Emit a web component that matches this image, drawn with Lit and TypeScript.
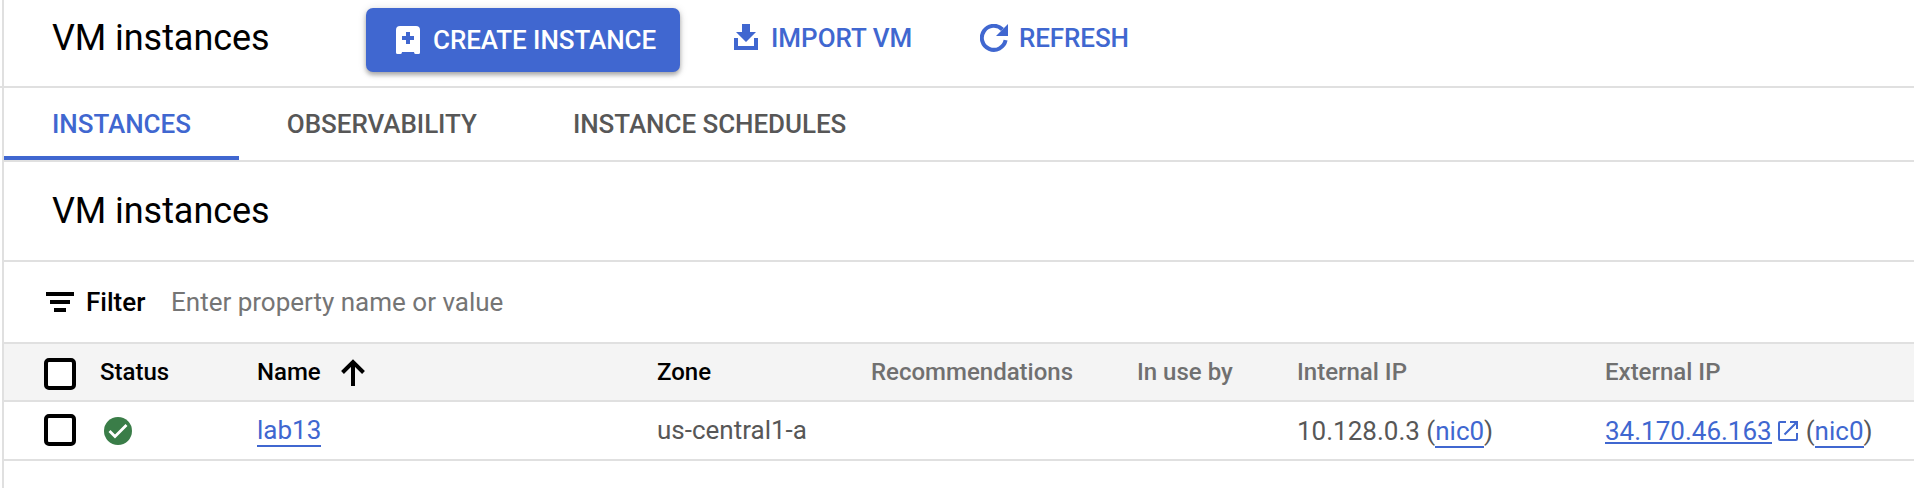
import { LitElement, html, css, svg } from "lit";
import { customElement } from "lit/decorators.js";

@customElement("app-root")
export class AppRoot extends LitElement {
  static styles = css`
    :host {
      display: block;
      box-sizing: border-box;
      height: 488px;
      overflow: hidden;
      background: #fff;
      color: #000;
      font-family: Roboto, "Liberation Sans", sans-serif;
      font-size: 26px;
      line-height: 32px;
    }
    *,
    *::before {
      box-sizing: border-box;
    }
    svg {
      display: block;
      flex: none;
    }
    .page {
      display: flex;
      height: 488px;
      padding-left: 2px;
    }
    .panel {
      flex: 1;
      border-left: 2px solid #e0e0e0;
    }
    .bar {
      display: flex;
      align-items: flex-start;
      height: 88px;
      margin-left: -4px;
      padding-left: 52px;
      border-bottom: 2px solid #e0e0e0;
    }
    .panel h1,
    .panel h2 {
      margin: 0;
      font-size: 36px;
      font-weight: 400;
      line-height: 48px;
      letter-spacing: -0.06px;
      white-space: nowrap;
    }
    .bar h1 {
      width: 314px;
      padding-top: 14px;
    }
    .btn {
      display: flex;
      align-items: center;
      height: 64px;
      padding: 0;
      border: 0;
      background: none;
      color: #4067d0;
      font: 500 26px/32px Roboto, sans-serif;
      white-space: nowrap;
    }
    .primary {
      width: 314px;
      margin-top: 8px;
      padding-left: 30px;
      gap: 13px;
      border-radius: 7px;
      background: #4067d0;
      color: #fff;
      letter-spacing: -0.08px;
      box-shadow: 0 3px 4px rgba(0, 0, 0, 0.28), 0 1px 8px rgba(0, 0, 0, 0.14);
    }
    .import {
      margin: 6px 0 0 54px;
      width: 246px;
      gap: 13px;
    }
    .refresh {
      margin-top: 6px;
      gap: 11px;
      letter-spacing: -0.1px;
    }
    .import svg {
      margin-top: -2px;
    }
    .tabs {
      display: flex;
      height: 74px;
      border-bottom: 2px solid #e0e0e0;
    }
    .tab {
      height: 72px;
      padding: 20px 48px 0;
      color: #575757;
      font-weight: 500;
      letter-spacing: -0.05px;
      white-space: nowrap;
    }
    .tab.on {
      color: #4067d0;
      border-bottom: 4px solid #4067d0;
    }
    .section {
      height: 100px;
      padding: 25px 0 0 48px;
      border-bottom: 2px solid #e0e0e0;
    }
    .filter {
      display: flex;
      align-items: center;
      height: 82px;
      padding-left: 42px;
      border-bottom: 2px solid #e0e0e0;
    }
    .filter b {
      width: 85px;
      margin-left: 12px;
      font-weight: 500;
    }
    .hint {
      color: #757575;
    }
    .row {
      display: grid;
      grid-template-columns: 56px 157px 400px 214px 266px 160px 308px 1fr;
      height: 59px;
      padding-left: 40px;
      border-bottom: 2px solid #e0e0e0;
      color: #575757;
      white-space: nowrap;
    }
    .cell {
      display: flex;
      align-items: flex-start;
      padding-top: 12px;
    }
    .head {
      height: 58px;
      background: #f4f4f4;
      color: #707070;
      font-size: 24px;
      font-weight: 500;
    }
    .head .key {
      color: #000;
    }
    .box {
      width: 32px;
      height: 32px;
      border: 4px solid #000;
      border-radius: 5px;
      background: #fff;
    }
    .head .box {
      margin-top: 2px;
    }
    .arrow {
      margin: 3px 0 0 20px;
    }
    .ok {
      margin: 3px 0 0 4px;
    }
    .link {
      color: #4067d0;
      height: 33px;
      border-bottom: 2px solid #4067d0;
      line-height: 32px;
    }
    .ip {
      padding-top: 14px;
    }
    .ip .link {
      height: 32px;
      line-height: 30px;
    }
    .ip .text {
      white-space: pre;
      line-height: 30px;
    }
    .ip .outer {
      height: 28px;
    }
    .open {
      margin: 5px 8px 0 6px;
    }
  `;

  render() {
    return html`
      <div class="page">
        <main class="panel">
          <header class="bar">
            <h1>VM instances</h1>
            <button class="btn primary">
              <svg width="24" height="28" viewBox="0 0 24 28">
                ${svg`<path fill="#fff" fill-rule="evenodd" d="M4 0H20A4 4 0 0 1 24 4V26.5Q24 28 22.5 28H19.5Q18 28 18 26H6Q6 28 4.500 28H1.500Q0 28 0 26.500V4A4 4 0 0 1 4 0ZM10 6V10H6V14H10V18H14V14H18V10H14V6Z"/>`}
              </svg>
              <span>CREATE INSTANCE</span>
            </button>
            <button class="btn import">
              <svg width="24" height="26" viewBox="0 0 24 26">
                <path fill="#4067d0" d="M8 0H16V8H22L12 18L2 8H8ZM0 14H4V22H20V14H24V26H0Z" />
              </svg>
              <span>IMPORT VM</span>
            </button>
            <button class="btn refresh">
              <svg width="28" height="28" viewBox="0 0 28 28">
                <path fill="none" stroke="#4067d0" stroke-width="4" d="M25.600 16.200A12 12 0 1 1 22.500 5.500" />
                <path fill="#4067d0" d="M28 0V12H16Z" />
              </svg>
              <span>REFRESH</span>
            </button>
          </header>
          <nav class="tabs">
            <div class="tab on">INSTANCES</div>
            <div class="tab">OBSERVABILITY</div>
            <div class="tab">INSTANCE SCHEDULES</div>
          </nav>
          <section class="section"><h2>VM instances</h2></section>
          <div class="filter">
            <svg width="28" height="20" viewBox="0 0 28 20">
              <path d="M0 0H28V4H0ZM4 8H24V12H4ZM8 16H20V20H8Z" />
            </svg>
            <b>Filter</b>
            <span class="hint">Enter property name or value</span>
          </div>
          <div class="row head">
            <div class="cell"><span class="box"></span></div>
            <div class="cell key">Status</div>
            <div class="cell key">
              Name
              <svg class="arrow" width="24" height="27" viewBox="0 0 24 27">
                <path fill="none" stroke="#000" stroke-width="4" d="M12 27V3M1.500 13.500L12 3L22.500 13.500" />
              </svg>
            </div>
            <div class="cell key">Zone</div>
            <div class="cell">Recommendations</div>
            <div class="cell">In use by</div>
            <div class="cell">Internal IP</div>
            <div class="cell">External IP</div>
          </div>
          <div class="row">
            <div class="cell"><span class="box"></span></div>
            <div class="cell">
              <svg class="ok" width="28" height="28" viewBox="0 0 28 28">
                <circle cx="14" cy="14" r="14" fill="#3a7d48" />
                <path fill="none" stroke="#fff" stroke-width="2.800" d="M5.500 14L11 19.500L22.500 8" />
              </svg>
            </div>
            <div class="cell"><span class="link">lab13</span></div>
            <div class="cell">us-central1-a</div>
            <div class="cell"></div>
            <div class="cell"></div>
            <div class="cell ip">
              <span class="text">10.128.0.3 (</span><span class="link">nic0</span><span class="text">)</span>
            </div>
            <div class="cell ip">
              <span class="link outer">34.170.46.163</span>
              <svg class="open" width="20" height="20" viewBox="0 0 20 20">
                <path fill="none" stroke="#4067d0" stroke-width="2" d="M8 1H2Q1 1 1 2V18Q1 19 2 19H18Q19 19 19 18V12M12 1H19V8M19 1L6.500 13.500" />
              </svg>
              <span class="text">(</span><span class="link">nic0</span><span class="text">)</span>
            </div>
          </div>
        </main>
      </div>
    `;
  }
}
